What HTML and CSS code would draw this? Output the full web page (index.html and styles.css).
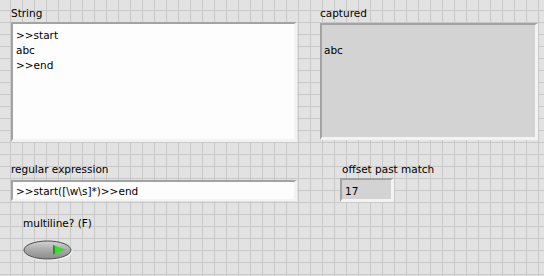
FILE: index.html
```html
<!DOCTYPE html>
<html lang="en">
<head>
    <meta charset="UTF-8">
    <title>Match Regular Expression</title>
    <link rel="stylesheet" href="styles.css">
</head>
<body>
    <div class="panel">
        <!-- top row: input string and captured output -->
        <div class="row row-top">
            <div class="control string-col">
                <div class="label">String</div>
                <div class="box box-white box-big">&gt;&gt;start<br>abc<br>&gt;&gt;end</div>
            </div>
            <div class="control captured-col">
                <div class="label">captured</div>
                <div class="box box-gray box-captured"><br>abc</div>
            </div>
        </div>

        <!-- regex + offset -->
        <div class="row row-mid">
            <div class="control string-col">
                <div class="label">regular expression</div>
                <div class="box box-white box-line">&gt;&gt;start([\w\s]*)&gt;&gt;end</div>
            </div>
            <div class="control offset-col">
                <div class="label">offset past match</div>
                <div class="box box-gray box-num">17</div>
            </div>
        </div>

        <!-- boolean -->
        <div class="row row-bottom">
            <div class="control">
                <div class="label">multiline? (F)</div>
                <svg class="toggle" width="50" height="22" viewBox="0 0 50 22">
                    <defs>
                        <linearGradient id="btnFill" x1="0" y1="0" x2="0" y2="1">
                            <stop offset="0" stop-color="#d4d4d4"/>
                            <stop offset="0.5" stop-color="#a9a9a9"/>
                            <stop offset="1" stop-color="#8c8c8c"/>
                        </linearGradient>
                    </defs>
                    <ellipse cx="25.5" cy="11" rx="24" ry="9.5" fill="#f6f6f6"/>
                    <ellipse cx="24.5" cy="10" rx="23.5" ry="9" fill="url(#btnFill)" stroke="#4b4b4b" stroke-width="1"/>
                    <polygon points="30,5 43,9.7 30,14.5" fill="#35e02a"/>
                    <polygon points="30,5 32,6 32,13.6 30,14.5" fill="#1e9a1a"/>
                </svg>
            </div>
        </div>
    </div>
</body>
</html>
```

FILE: styles.css
```css
/* front panel */
body {
    margin: 0;
    font-family: "DejaVu Sans", Tahoma, sans-serif;
    font-size: 10.5px;
    color: #000;
    background-color: #e2e2e2;
    background-image:
        linear-gradient(to right, transparent 10px, #c8c8c8 10px, #c8c8c8 11px, transparent 11px),
        linear-gradient(to bottom, transparent 10px, #c8c8c8 10px, #c8c8c8 11px, transparent 11px);
    background-size: 12px 12px;
    width: 544px;
    height: 276px;
    overflow: hidden;
}

.panel {
    padding: 6px 0 0 11px;
}

.row {
    display: flex;
}

.label {
    height: 14px;
    line-height: 14px;
    white-space: nowrap;
}

.box {
    box-sizing: border-box;
    line-height: 15px;
    border-top: 2px solid #a3a3a3;
    border-left: 2px solid #a3a3a3;
    border-bottom: 3px solid #f3f3f3;
    border-right: 3px solid #f3f3f3;
    white-space: nowrap;
}

.box-white {
    background: #fdfdfd;
}

.box-gray {
    background: #d3d3d3;
}

/* top row */
.row-top {
    gap: 23px;
}

.string-col {
    width: 286px;
}

.box-big {
    margin-top: 2px;
    height: 120px;
    padding: 4px 3px;
}

.box-captured {
    margin-top: 3px;
    width: 218px;
    height: 117px;
    padding: 3px 2px;
}

/* middle row */
.row-mid {
    margin-top: 20px;
    gap: 43px;
}

.box-line {
    margin-top: 4px;
    height: 21px;
    padding: 2px 3px 0;
    border-bottom-width: 2px;
}

.offset-col .label {
    padding-left: 2px;
}

.box-num {
    margin-top: 2px;
    width: 54px;
    height: 24px;
    padding: 4px 3px 0;
}

/* bottom row */
.row-bottom {
    margin-top: 14px;
    padding-left: 12px;
}

.toggle {
    display: block;
    margin-top: 10px;
}
```
